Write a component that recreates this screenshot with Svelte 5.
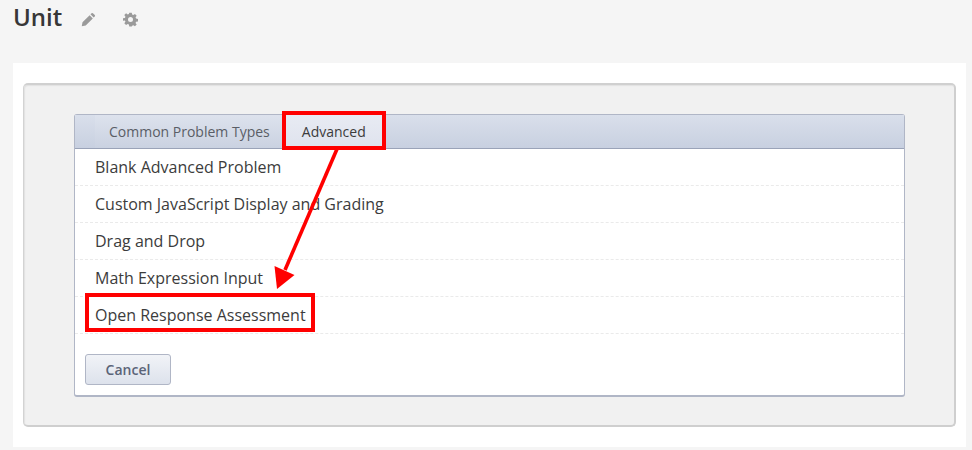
<script>
  const problems = [
    'Blank Advanced Problem',
    'Custom JavaScript Display and Grading',
    'Drag and Drop',
    'Math Expression Input',
    'Open Response Assessment'
  ];
</script>

<div class="page">
  <header class="title-bar">
    <h1>Unit</h1>
    <svg class="icon pencil" viewBox="0 0 16 16" aria-hidden="true">
      <path d="M11.3 1.3a1 1 0 0 1 1.4 0l2 2a1 1 0 0 1 0 1.4l-1.2 1.2-3.4-3.4zM9.2 3.4l3.4 3.4-7.6 7.6L.8 15.2l.8-4.2z" />
    </svg>
    <svg class="icon gear" viewBox="0 0 24 24" aria-hidden="true">
      <path fill-rule="evenodd" d="M10 1h4l.6 3.1 1.9.8 2.6-1.8 2.8 2.8-1.8 2.6.8 1.9 3.1.6v4l-3.1.6-.8 1.9 1.8 2.6-2.8 2.8-2.6-1.8-1.9.8L14 23h-4l-.6-3.1-1.9-.8-2.6 1.8-2.8-2.8 1.8-2.6-.8-1.9L0 14v-4l3.1-.6.8-1.9-1.8-2.6 2.8-2.8 2.6 1.8 1.9-.8zM12 8a4 4 0 1 0 0 8 4 4 0 0 0 0-8z" />
    </svg>
  </header>

  <main class="panel">
    <section class="well">
      <div class="menu">
        <nav class="tabs">
          <span class="tab">Common Problem Types</span>
          <span class="tab active">Advanced</span>
        </nav>
        <ul class="rows">
          {#each problems as problem}
            <li>{problem}</li>
          {/each}
        </ul>
        <div class="actions">
          <button type="button">Cancel</button>
        </div>
      </div>
    </section>

    <!-- annotations drawn over the screenshot -->
    <div class="callout callout-tab"></div>
    <div class="callout callout-row"></div>
    <svg class="arrow" viewBox="0 0 972 450" aria-hidden="true">
      <line x1="337" y1="149" x2="285" y2="270" stroke="#f00" stroke-width="3.6" />
      <polygon points="277,289 274.5,266 294.5,275" fill="#f00" />
    </svg>
  </main>
</div>

<style>
  :global(body) {
    margin: 0;
    background: #f5f5f5;
  }

  .page {
    width: 972px;
    height: 450px;
    overflow: hidden;
    font-family: "Open Sans", sans-serif;
    color: #3c3c3c;
  }

  .title-bar {
    display: flex;
    align-items: center;
    height: 63px;
    padding: 0 0 30px 13px;
    box-sizing: border-box;
  }

  h1 {
    margin: 0;
    font-size: 24px;
    font-weight: 600;
    line-height: 33px;
    color: #373737;
  }

  .icon {
    fill: #9a9a9a;
  }

  .pencil {
    width: 15px;
    height: 15px;
    margin-left: 19px;
    margin-top: 5px;
  }

  .gear {
    width: 15px;
    height: 15px;
    margin-left: 27px;
    margin-top: 5px;
  }

  .panel {
    margin: 0 6px 0 13px;
    height: 384px;
    padding: 20px 10px;
    box-sizing: border-box;
    background: #fff;
  }

  .well {
    height: 344px;
    padding: 29px 49px 0 50px;
    box-sizing: border-box;
    background: #f1f1f1;
    border: 1px solid #d3d3d3;
    border-top: 2px solid #d0d0d0;
    border-right: 2px solid #cfcfcf;
    border-bottom: 2px solid #cfcfcf;
    border-radius: 5px;
    box-shadow: inset 1px 1px 1px #e2e2e2;
  }

  .menu {
    height: 283px;
    box-sizing: border-box;
    background: #fff;
    border: 1px solid #b0b6c6;
    border-bottom-width: 2px;
    border-radius: 3px;
  }

  .tabs {
    display: flex;
    height: 33px;
    padding-left: 20px;
    background: linear-gradient(#d9dfeb, #c8d0e0);
    border-bottom: 1px solid #9aa3b8;
  }

  .tab {
    padding: 0 13px 0 14px;
    font-size: 14px;
    line-height: 34px;
    color: #5a5e66;
    background: linear-gradient(#dde2ed, #cad2e1);
  }

  .tab.active {
    width: 102px;
    padding: 0;
    text-align: center;
    color: #3c3c3c;
    background: linear-gradient(#e8ebf3, #dfe3ee);
  }

  .rows {
    margin: 0;
    padding: 0;
    list-style: none;
  }

  li {
    height: 37px;
    padding-left: 20px;
    box-sizing: border-box;
    font-size: 16px;
    line-height: 36px;
    border-bottom: 1px dashed #eaeaea;
  }

  .actions {
    padding: 20px 10px 0;
  }

  button {
    display: block;
    width: 86px;
    height: 31px;
    padding: 0;
    font-family: inherit;
    font-size: 14px;
    font-weight: 600;
    color: #5b6478;
    background: linear-gradient(#f1f3f7, #dde2ec);
    border: 1px solid #b0b6c6;
    border-radius: 3px;
  }

  .callout {
    position: absolute;
    box-sizing: border-box;
    border: 4px solid #f00;
  }

  .callout-tab {
    left: 282px;
    top: 111px;
    width: 104px;
    height: 39px;
  }

  .callout-row {
    left: 85px;
    top: 293px;
    width: 230px;
    height: 39px;
  }

  .arrow {
    position: absolute;
    left: 0;
    top: 0;
    width: 972px;
    height: 450px;
    pointer-events: none;
  }
</style>
